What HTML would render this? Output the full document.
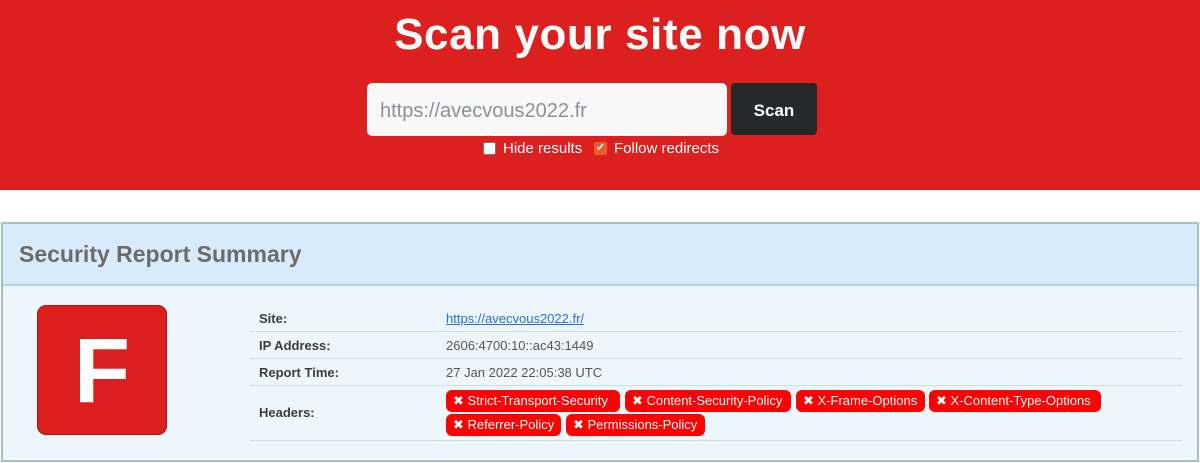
<!DOCTYPE html>
<html><head><meta charset="utf-8"><style>
*{margin:0;padding:0;box-sizing:border-box}
body{width:1200px;height:463px;background:#fff;font-family:"Liberation Sans",sans-serif;position:relative;overflow:hidden}
.ban{position:absolute;left:0;top:0;width:1200px;height:190px;background:#dc1f1f}
h1{position:absolute;top:10px;left:0;width:1200px;text-align:center;color:#fff;font-size:44px;font-weight:bold;letter-spacing:0.6px}
.inp{position:absolute;left:367px;top:83px;width:360px;height:53px;background:#f8f8f8;border-radius:5px;color:#8a9199;font-size:20px;padding:17px 0 0 13px}
.btn{position:absolute;left:731px;top:83px;width:86px;height:52px;background:#26282c;border-radius:4px;color:#fff;font-weight:bold;font-size:17px;text-align:center;line-height:55px}
.cb{position:absolute;top:142px;width:13px;height:13px;border-radius:2px}
.lbl{position:absolute;top:140px;color:#fff;font-size:15px}
.panel{position:absolute;left:1px;top:222px;width:1198px;height:240px;border:2px solid #a8bfc4;background:#eef6fd}
.ph{height:62px;background:#d9eafa;border-bottom:2px solid #bdd1dc;color:#6b6b6b;font-size:23px;font-weight:bold;padding:17px 0 0 16px}
.grade{position:absolute;left:37px;top:305px;width:130px;height:130px;background:#dc1e1e;border:1.5px solid #a51616;border-radius:9px;color:#fff;font-size:92px;font-weight:bold;text-align:center;line-height:130px}
.rl{position:absolute;left:250px;width:932px;height:1px;background:#d5dde3}
.k{position:absolute;left:259px;font-size:13px;font-weight:bold;color:#3c3c3c}
.v{position:absolute;left:446px;font-size:13px;color:#555}
.b{position:absolute;height:22px;background:#f00;border-radius:6px;color:#fff;font-size:13px;line-height:22px;padding-left:7px;white-space:nowrap}
</style></head><body>
<div class="ban"></div>
<h1>Scan your site now</h1>
<div class="inp">https://avecvous2022.fr</div>
<div class="btn">Scan</div>
<div class="cb" style="left:483px;background:#fff;border:1px solid #777"></div>
<div class="lbl" style="left:503px">Hide results</div>
<div class="cb" style="left:594px;background:#f05a28;color:#fff;font-size:11px;line-height:13px;text-align:center">✔</div>
<div class="lbl" style="left:614px">Follow redirects</div>
<div class="panel"><div class="ph">Security Report Summary</div></div>
<div class="grade">F</div>
<div class="k" style="top:311px">Site:</div>
<div class="v" style="top:311px;color:#2a6fd6;text-decoration:underline">https://avecvous2022.fr/</div>
<div class="rl" style="top:331px"></div>
<div class="k" style="top:338px">IP Address:</div>
<div class="v" style="top:338px">2606:4700:10::ac43:1449</div>
<div class="rl" style="top:358px"></div>
<div class="k" style="top:365px">Report Time:</div>
<div class="v" style="top:365px">27 Jan 2022 22:05:38 UTC</div>
<div class="rl" style="top:385px"></div>
<div class="k" style="top:405px">Headers:</div>
<div class="b" style="left:446px;top:390px;width:174px">✖ Strict-Transport-Security</div>
<div class="b" style="left:625px;top:390px;width:166px">✖ Content-Security-Policy</div>
<div class="b" style="left:796px;top:390px;width:129px">✖ X-Frame-Options</div>
<div class="b" style="left:929px;top:390px;width:172px">✖ X-Content-Type-Options</div>
<div class="b" style="left:446px;top:414px;width:115px">✖ Referrer-Policy</div>
<div class="b" style="left:566px;top:414px;width:139px">✖ Permissions-Policy</div>
<div class="rl" style="top:440px"></div>
</body></html>
